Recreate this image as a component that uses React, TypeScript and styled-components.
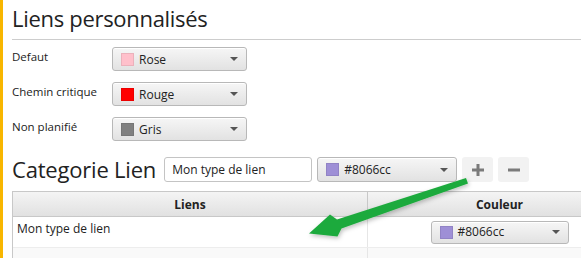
import React from "react";
import styled, { createGlobalStyle } from "styled-components";

const GlobalStyle = createGlobalStyle`
  html, body {
    margin: 0;
    padding: 0;
    background: #fff;
    overflow: hidden;
  }
  body {
    font-family: "Open Sans", "Noto Sans", sans-serif;
    color: #222;
  }
`;

const linkTypes = [
  { label: "Defaut", color: "#ffc0cb", name: "Rose" },
  { label: "Chemin critique", color: "#ff0000", name: "Rouge" },
  { label: "Non planifié", color: "#808080", name: "Gris" },
];

type ComboProps = { color: string; value: string; width: number; height?: number };

const ColorCombo = ({ color, value, width, height = 24 }: ComboProps) => (
  <Combo $width={width} $height={height}>
    <Swatch $color={color} />
    <ComboText>{value}</ComboText>
    <Caret />
  </Combo>
);

const App = () => {
  return (
    <>
      <GlobalStyle />
      <Page>
        <AccentBar />
        <Main>
          <Header>
            <Title>Liens personnalisés</Title>
          </Header>
          <FormGrid>
            {linkTypes.map((t) => (
              <React.Fragment key={t.label}>
                <FieldLabel>{t.label}</FieldLabel>
                <ColorCombo color={t.color} value={t.name} width={135} />
              </React.Fragment>
            ))}
          </FormGrid>
          <Toolbar>
            <SectionTitle>Categorie Lien</SectionTitle>
            <TextField defaultValue="Mon type de lien" />
            <ColorCombo color="#9e8fd6" value="#8066cc" width={140} height={25} />
            <IconButton aria-label="ajouter">
              <svg width="12" height="12" viewBox="0 0 12 12">
                <rect x="4.5" y="0" width="3" height="12" fill="#7b7b7b" />
                <rect x="0" y="4.5" width="12" height="3" fill="#7b7b7b" />
              </svg>
            </IconButton>
            <IconButton aria-label="supprimer">
              <svg width="12" height="12" viewBox="0 0 12 12">
                <rect x="0" y="4.5" width="12" height="3" fill="#7b7b7b" />
              </svg>
            </IconButton>
          </Toolbar>
          <Table>
            <HeadRow>
              <HeadCell $width={354}>Liens</HeadCell>
              <HeadCell $width={264}>Couleur</HeadCell>
            </HeadRow>
            <BodyRow $odd={false}>
              <BodyCell $width={354}>Mon type de lien</BodyCell>
              <BodyCell $width={264} $center>
                <ColorCombo color="#9e8fd6" value="#8066cc" width={138} height={23} />
              </BodyCell>
            </BodyRow>
            <BodyRow $odd>
              <BodyCell $width={354} />
              <BodyCell $width={264} />
            </BodyRow>
          </Table>
        </Main>
        <Arrow width="581" height="258" viewBox="0 0 581 258">
          <defs>
            <filter id="shade" x="-10%" y="-10%" width="120%" height="130%">
              <feDropShadow dx="1" dy="2" stdDeviation="2" floodColor="#000" floodOpacity="0.25" />
            </filter>
          </defs>
          <polygon
            points="466,178 337,219.5 330,214.5 309,233.5 337.5,236.5 341.5,228.5 468,183.5"
            fill="#1eaa3e"
            filter="url(#shade)"
          />
        </Arrow>
      </Page>
    </>
  );
};

export default App;

const Page = styled.div`
  position: relative;
  display: flex;
  width: 581px;
  height: 258px;
  overflow: hidden;
`;

const AccentBar = styled.div`
  flex: 0 0 3px;
  background: #f8b600;
`;

const Main = styled.div`
  flex: 1;
  min-width: 0;
  padding-left: 9px;
`;

const Header = styled.div`
  height: 40px;
  border-bottom: 1px solid #cdcdcd;
  box-sizing: border-box;
`;

const Title = styled.h1`
  margin: 0;
  padding-top: 2px;
  font-size: 22px;
  font-weight: 400;
  line-height: 32px;
  color: #222;
  letter-spacing: -0.3px;
`;

const FormGrid = styled.div`
  display: grid;
  grid-template-columns: 100px auto;
  justify-content: start;
  row-gap: 11px;
  margin-top: 7px;
`;

const FieldLabel = styled.div`
  font-size: 11.5px;
  line-height: 17px;
  padding-top: 1px;
  color: #222;
`;

const Combo = styled.div<{ $width: number; $height: number }>`
  box-sizing: border-box;
  width: ${(p) => p.$width}px;
  height: ${(p) => p.$height}px;
  display: flex;
  align-items: center;
  padding: 0 8px;
  border: 1px solid #b8b8b8;
  border-radius: 3px;
  background: linear-gradient(#f6f6f6, #e2e2e2);
  box-shadow: inset 0 1px 0 #fff;
`;

const Swatch = styled.span<{ $color: string }>`
  flex: 0 0 auto;
  width: 11px;
  height: 11px;
  background: ${(p) => p.$color};
  border: 1px solid rgba(0, 0, 0, 0.08);
  margin-right: 5px;
`;

const ComboText = styled.span`
  flex: 1;
  font-size: 12px;
  color: #222;
  white-space: nowrap;
`;

const Caret = styled.span`
  width: 0;
  height: 0;
  border-left: 4px solid transparent;
  border-right: 4px solid transparent;
  border-top: 4px solid #555;
`;

const Toolbar = styled.div`
  display: flex;
  align-items: center;
  gap: 5px;
  margin-top: 16px;
  height: 25px;
`;

const SectionTitle = styled.h2`
  margin: 0 3px 0 0;
  font-size: 22px;
  font-weight: 400;
  line-height: 25px;
  color: #222;
  letter-spacing: -0.2px;
  white-space: nowrap;
`;

const TextField = styled.input`
  box-sizing: border-box;
  width: 148px;
  height: 25px;
  padding: 0 7px;
  border: 1px solid #c4c4c4;
  border-radius: 3px;
  font-family: inherit;
  font-size: 12px;
  color: #222;
  outline: none;
`;

const IconButton = styled.button`
  width: 31px;
  height: 25px;
  padding: 0;
  border: none;
  border-radius: 3px;
  background: #f2f2f2;
  display: flex;
  align-items: center;
  justify-content: center;
`;

const Table = styled.div`
  margin-top: 9px;
  width: 620px;
  height: 80px;
  border-left: 1px solid #c8c8c8;
  border-top: 1px solid #c8c8c8;
`;

const HeadRow = styled.div`
  display: flex;
  height: 24px;
  background: linear-gradient(#f4f4f4, #e1e1e1);
  border-bottom: 1px solid #c8c8c8;
`;

const HeadCell = styled.div<{ $width: number }>`
  box-sizing: border-box;
  width: ${(p) => p.$width}px;
  display: flex;
  align-items: center;
  justify-content: center;
  font-size: 12px;
  font-weight: 700;
  color: #222;
  & + & {
    border-left: 1px solid #c8c8c8;
  }
`;

const BodyRow = styled.div<{ $odd: boolean }>`
  display: flex;
  height: 30px;
  background: ${(p) => (p.$odd ? "#f9f9f9" : "#fff")};
  border-bottom: 1px solid #ededed;
`;

const BodyCell = styled.div<{ $width: number; $center?: boolean }>`
  box-sizing: border-box;
  width: ${(p) => p.$width}px;
  display: flex;
  align-items: ${(p) => (p.$center ? "center" : "flex-start")};
  justify-content: ${(p) => (p.$center ? "center" : "flex-start")};
  padding: ${(p) => (p.$center ? "0" : "4px 4px")};
  font-size: 12px;
  line-height: 16px;
  color: #222;
  & + & {
    border-left: 1px solid #e6e6e6;
  }
`;

const Arrow = styled.svg`
  position: absolute;
  top: 0;
  left: 0;
  pointer-events: none;
`;
